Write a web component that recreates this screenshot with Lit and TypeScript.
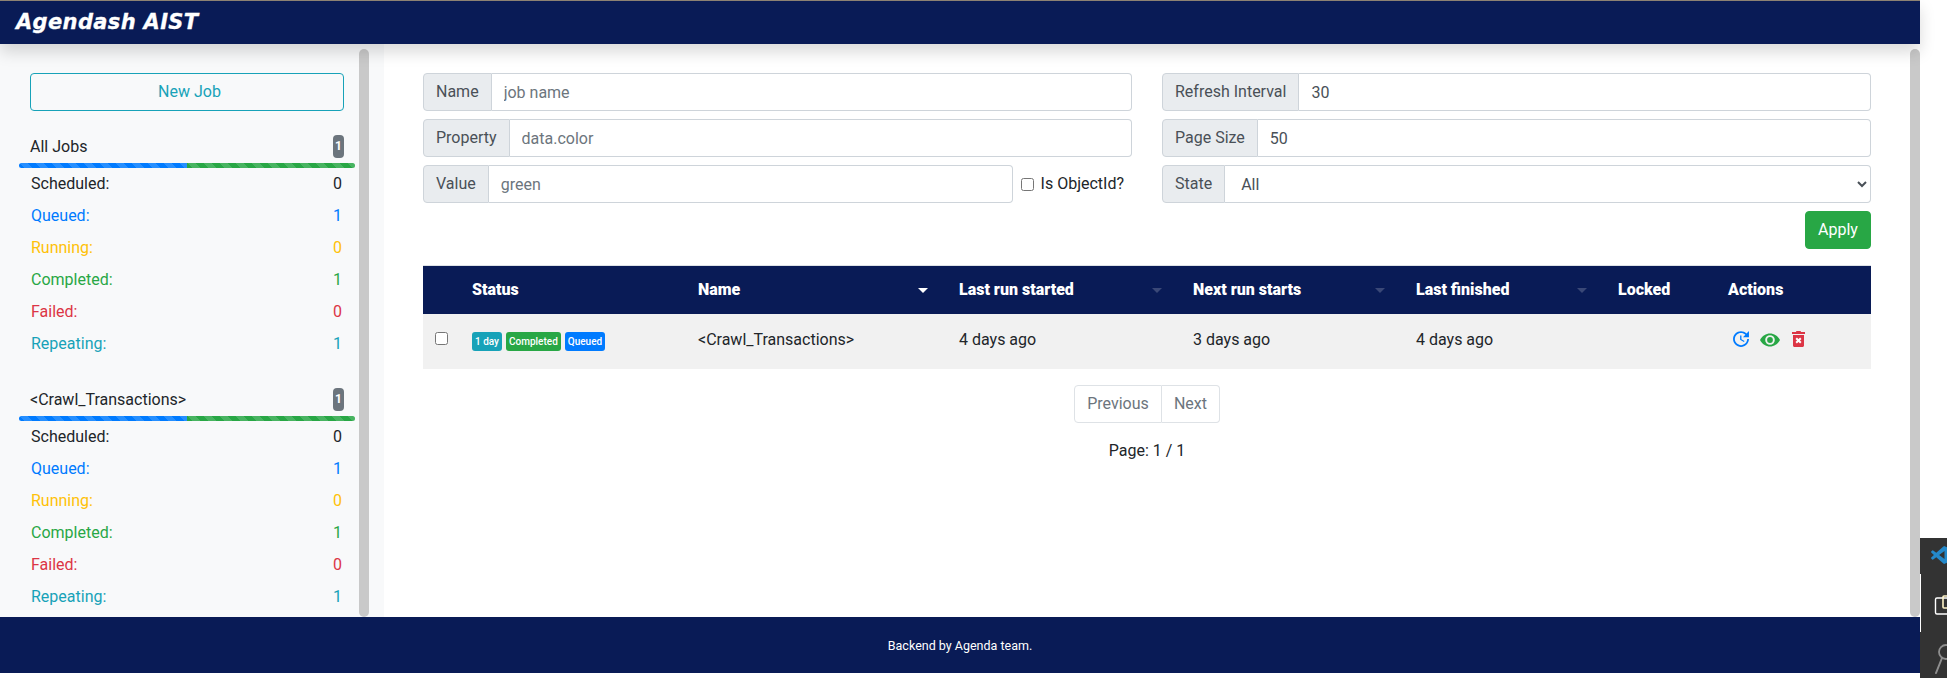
import { LitElement, html, css, svg } from "lit";
import { customElement } from "lit/decorators.js";

const STATS = [
  { label: "Scheduled:", value: 0, cls: "dark" },
  { label: "Queued:", value: 1, cls: "blue" },
  { label: "Running:", value: 0, cls: "amber" },
  { label: "Completed:", value: 1, cls: "green" },
  { label: "Failed:", value: 0, cls: "red" },
  { label: "Repeating:", value: 1, cls: "teal" },
];

const HEADS = [
  { label: "", sort: "" },
  { label: "Status", sort: "" },
  { label: "Name", sort: "on" },
  { label: "Last run started", sort: "off" },
  { label: "Next run starts", sort: "off" },
  { label: "Last finished", sort: "off" },
  { label: "Locked", sort: "" },
  { label: "Actions", sort: "" },
];

@customElement("app-root")
export class AppRoot extends LitElement {
  static styles = css`
    :host {
      display: block;
      width: 1947px;
      height: 678px;
      position: relative;
      overflow: hidden;
      background: #fff;
      font-family: Roboto, "Liberation Sans", sans-serif;
      font-size: 16px;
      line-height: 24px;
      color: #212529;
    }
    * { box-sizing: border-box; }
    .window { width: 1920px; height: 678px; display: flex; flex-direction: column; }
    .nav {
      position: relative;
      z-index: 2;
      height: 44px;
      flex: none;
      background: #091b56;
      border-top: 1px solid #8d8273;
      box-shadow: 0 8px 16px rgba(0, 0, 0, 0.15);
      padding-left: 16px;
      display: flex;
      align-items: center;
    }
    .brand {
      font-family: "DejaVu Sans", sans-serif;
      font-weight: 700;
      font-style: italic;
      font-size: 21px;
      line-height: 24px;
      letter-spacing: 0.35px;
      -webkit-text-stroke: 0.3px #fff;
      color: #fff;
      margin-top: -2px;
    }
    .body { height: 573px; flex: none; display: flex; overflow: hidden; }
    .side {
      width: 384px;
      flex: none;
      background: #f8f9fa;
      display: flex;
      overflow: hidden;
    }
    .side-inner { width: 359px; flex: none; padding: 29px 15px 0 30px; }
    .thumb {
      width: 10px;
      flex: none;
      margin-top: 5px;
      background: #c9c9c9;
      border-radius: 5px;
    }
    .new-job {
      display: block;
      width: 100%;
      height: 38px;
      background: transparent;
      border: 1px solid #17a2b8;
      border-radius: 4px;
      color: #17a2b8;
      font: inherit;
      padding: 0 0 0 5px;
    }
    .group { margin-top: 32px; }
    .group.first { margin-top: 24px; }
    .title {
      display: flex;
      justify-content: space-between;
      align-items: center;
      height: 23px;
    }
    .count {
      width: 11px;
      height: 23px;
      background: #6c757d;
      color: #fff;
      border-radius: 4px;
      font-size: 12px;
      font-weight: 700;
      text-align: center;
      line-height: 23px;
    }
    .progress {
      display: flex;
      height: 5px;
      margin: 5px -11px 4px;
      border-radius: 4px;
      overflow: hidden;
    }
    .progress span {
      flex: 1;
      background-image: linear-gradient(
        45deg,
        rgba(255, 255, 255, 0.15) 25%,
        transparent 25%,
        transparent 50%,
        rgba(255, 255, 255, 0.15) 50%,
        rgba(255, 255, 255, 0.15) 75%,
        transparent 75%,
        transparent
      );
      background-size: 16px 16px;
    }
    .progress .p1 { background-color: #007bff; }
    .progress .p2 { background-color: #28a745; }
    .stats { display: flex; flex-direction: column; gap: 8px; padding: 0 2px 0 1px; }
    .stat { display: flex; justify-content: space-between; }
    .dark { color: #212529; }
    .blue { color: #007bff; }
    .amber { color: #ffc107; }
    .green { color: #28a745; }
    .red { color: #dc3545; }
    .teal { color: #17a2b8; }

    .main { flex: 1; min-width: 0; display: flex; background: #fff; }
    .content { flex: 1; min-width: 0; padding: 29px 39px 0; }
    .filters { display: grid; grid-template-columns: 1fr 1fr; column-gap: 30px; }
    .col { display: flex; flex-direction: column; gap: 8px; min-width: 0; }
    .ig { display: flex; height: 38px; flex: 1; min-width: 0; }
    .row { display: flex; align-items: center; height: 38px; }
    .addon {
      background: #e9ecef;
      border: 1px solid #ced4da;
      border-radius: 4px 0 0 4px;
      padding: 6px 12px;
      color: #495057;
      white-space: nowrap;
      flex: none;
    }
    .ig input, .ig select {
      flex: 1;
      min-width: 0;
      height: 38px;
      border: 1px solid #ced4da;
      border-left: 0;
      border-radius: 0 4px 4px 0;
      padding: 6px 12px;
      font: inherit;
      color: #495057;
      background: #fff;
      outline: none;
    }
    .ig input::placeholder { color: #6c757d; opacity: 1; }
    .check { display: flex; align-items: center; margin-left: 8px; padding-right: 8px; gap: 7px; white-space: nowrap; }
    .check input { margin: 0; width: 13px; height: 13px; }
    .apply-row { display: flex; justify-content: flex-end; margin-top: 8px; }
    .apply {
      height: 38px;
      width: 66px;
      padding: 0;
      background: #28a745;
      border: 1px solid #28a745;
      border-radius: 4px;
      color: #fff;
      font: inherit;
    }
    table {
      width: 100%;
      table-layout: fixed;
      border-collapse: collapse;
      margin-top: 16px;
      border-top: 1px solid #dee2e6;
    }
    .c0 { width: 37px; } .c1 { width: 226px; } .c2 { width: 261px; } .c3 { width: 234px; }
    .c4 { width: 223px; } .c5 { width: 202px; } .c6 { width: 110px; } .c7 { width: 155px; }
    th {
      background: #091b56;
      color: #fff;
      height: 48px;
      padding: 12px;
      text-align: left;
      font-weight: 900;
      font-size: 16px;
    }
    .th { display: flex; justify-content: space-between; align-items: center; }
    .arrow {
      width: 0;
      height: 0;
      margin-right: 7px;
      border-left: 5px solid transparent;
      border-right: 5px solid transparent;
      border-top: 5px solid #fff;
    }
    .arrow.off { opacity: 0.2; }
    td {
      background: #f1f1f1;
      height: 55px;
      padding: 14px 12px 0;
      vertical-align: top;
    }
    td input { display: block; margin: 4px 0 0; width: 13px; height: 13px; }
    .badges { display: flex; gap: 4px; margin-top: 4px; }
    .badge {
      height: 19px;
      padding: 0 3px;
      border-radius: 3px;
      color: #fff;
      font-size: 10px;
      font-weight: 500;
      line-height: 19px;
      white-space: nowrap;
    }
    .bt { background: #17a2b8; }
    .bg { background: #28a745; }
    .bb { background: #007bff; }
    .actions { display: flex; align-items: flex-start; margin: 3px 0 0 5px; }
    .i-refresh { width: 16px; height: 16px; display: block; }
    .i-eye { width: 20px; height: 14px; display: block; margin: 2px 0 0 11px; }
    .i-trash { width: 13px; height: 16px; display: block; margin-left: 12px; }
    .pager { display: flex; justify-content: center; margin-top: 16px; }
    .pager button {
      height: 38px;
      background: #fff;
      border: 1px solid #dee2e6;
      color: #6c757d;
      font: inherit;
      padding: 0;
    }
    .prev { width: 88px; border-radius: 4px 0 0 4px; }
    .next { width: 58px; border-left: 0 !important; border-radius: 0 4px 4px 0; }
    .page { text-align: center; margin-top: 16px; }
    .footer {
      height: 56px;
      flex: none;
      background: #091b56;
      color: #fff;
      font-size: 12.5px;
      font-weight: 400;
      text-align: center;
      line-height: 57px;
    }
    .dock {
      position: absolute;
      left: 1920px;
      top: 538px;
      width: 27px;
      height: 140px;
      background: #333;
      overflow: hidden;
    }
    .dock svg { display: block; width: 27px; height: 140px; }
  `;

  private stats() {
    return html`<div class="stats">
      ${STATS.map(
        (s) => html`<div class="stat ${s.cls}"><span>${s.label}</span><span>${s.value}</span></div>`
      )}
    </div>`;
  }

  private group(name: string, first = false) {
    return html`<div class="group ${first ? "first" : ""}">
      <div class="title"><span>${name}</span><span class="count">1</span></div>
      <div class="progress"><span class="p1"></span><span class="p2"></span></div>
      ${this.stats()}
    </div>`;
  }

  render() {
    return html`
      <div class="window">
        <div class="nav"><span class="brand">Agendash AIST</span></div>
        <div class="body">
          <div class="side">
            <div class="side-inner">
              <button class="new-job">New Job</button>
              ${this.group("All Jobs", true)}
              ${this.group("<Crawl_Transactions>")}
            </div>
            <div class="thumb"></div>
          </div>
          <div class="main">
            <div class="content">
              <div class="filters">
                <div class="col">
                  <div class="ig"><span class="addon">Name</span><input placeholder="job name" /></div>
                  <div class="ig"><span class="addon">Property</span><input placeholder="data.color" /></div>
                  <div class="row">
                    <div class="ig"><span class="addon">Value</span><input placeholder="green" /></div>
                    <label class="check"><input type="checkbox" />Is ObjectId?</label>
                  </div>
                </div>
                <div class="col">
                  <div class="ig"><span class="addon">Refresh Interval</span><input value="30" /></div>
                  <div class="ig"><span class="addon">Page Size</span><input value="50" /></div>
                  <div class="ig"><span class="addon">State</span><select><option>All</option></select></div>
                </div>
              </div>
              <div class="apply-row"><button class="apply">Apply</button></div>
              <table>
                <colgroup>
                  ${HEADS.map((_, i) => html`<col class="c${i}" />`)}
                </colgroup>
                <thead>
                  <tr>
                    ${HEADS.map(
                      (h) => html`<th>
                        <div class="th">
                          <span>${h.label}</span>
                          ${h.sort ? html`<span class="arrow ${h.sort}"></span>` : ""}
                        </div>
                      </th>`
                    )}
                  </tr>
                </thead>
                <tbody>
                  <tr>
                    <td><input type="checkbox" /></td>
                    <td>
                      <div class="badges">
                        <span class="badge bt">1 day</span>
                        <span class="badge bg">Completed</span>
                        <span class="badge bb">Queued</span>
                      </div>
                    </td>
                    <td>&lt;Crawl_Transactions&gt;</td>
                    <td>4 days ago</td>
                    <td>3 days ago</td>
                    <td>4 days ago</td>
                    <td></td>
                    <td>
                      <div class="actions">
                        <svg class="i-refresh" viewBox="3 3 18 18.1">
                          <path
                            fill="#007bff"
                            d="M21 10.12h-6.78l2.74-2.82c-2.73-2.7-7.15-2.8-9.88-.1-2.73 2.71-2.73 7.08 0 9.79s7.15 2.71 9.88 0C18.32 15.65 19 14.08 19 12.1h2c0 1.98-.88 4.55-2.64 6.29-3.51 3.48-9.21 3.48-12.72 0-3.5-3.47-3.53-9.11-.02-12.58s9.14-3.47 12.65 0L21 3v7.12zM12.5 8v4.25l3.5 2.08-.72 1.21L11 13V8h1.5z"
                          />
                        </svg>
                        <svg class="i-eye" viewBox="0 0 20 14">
                          <path
                            fill="#28a745"
                            fill-rule="evenodd"
                            d="M0 7C2.2 2.8 6 0.5 10 0.5S17.8 2.8 20 7C17.8 11.2 14 13.5 10 13.5S2.2 11.2 0 7ZM10 2.2A4.8 4.8 0 1 0 10 11.8A4.8 4.8 0 1 0 10 2.2Z"
                          />
                          <circle cx="10" cy="7" r="2.9" fill="#28a745" />
                        </svg>
                        <svg class="i-trash" viewBox="0 0 13 16">
                          <path fill="#dc3545" d="M4.5 0h4l.6 1H13v2H0V1h3.9zM1 4h11v10.5c0 .8-.7 1.5-1.5 1.5h-8C1.7 16 1 15.3 1 14.5z" />
                          <path stroke="#fff" stroke-width="2" d="M4.2 7.2l4.6 4.6M8.8 7.2l-4.6 4.6" />
                        </svg>
                      </div>
                    </td>
                  </tr>
                </tbody>
              </table>
              <div class="pager">
                <button class="prev">Previous</button><button class="next">Next</button>
              </div>
              <div class="page">Page: 1 / 1</div>
            </div>
            <div class="thumb"></div>
          </div>
        </div>
        <div class="footer">Backend by Agenda team.</div>
      </div>
      <div class="dock">
        <svg viewBox="0 0 27 140">
          ${svg`
            <rect x="0" y="36" width="1" height="58" fill="#fff" />
            <g transform="translate(11 8) scale(0.75)">
              <path fill="#2489ca" d="M23.15 2.587L18.21.21a1.494 1.494 0 0 0-1.705.29l-9.46 8.63-4.12-3.128a.999.999 0 0 0-1.276.057L.327 7.261A1 1 0 0 0 .326 8.74L3.899 12 .326 15.26a1 1 0 0 0 .001 1.479L1.65 17.94a.999.999 0 0 0 1.276.057l4.12-3.128 9.46 8.63a1.492 1.492 0 0 0 1.704.29l4.942-2.377A1.5 1.5 0 0 0 24 20.06V3.939a1.5 1.5 0 0 0-.85-1.352zm-5.146 14.861L10.826 12l7.178-5.448v10.896z" />
            </g>
            <path fill="none" stroke="#fff" stroke-width="1.4" d="M27 60h-10c-1 0-1.5.5-1.5 1.5v13c0 1 .5 1.5 1.5 1.5h10" />
            <path fill="none" stroke="#fff4c8" stroke-width="1.6" d="M27 58h-3c-.6 0-1 .4-1 1v10c0 .6.4 1 1 1h3" />
            <circle cx="26" cy="114" r="7" fill="none" stroke="#8f8f8f" stroke-width="1.8" />
            <path stroke="#8f8f8f" stroke-width="2" stroke-linecap="round" d="M22 120l-6 15" />
          `}
        </svg>
      </div>
    `;
  }
}
